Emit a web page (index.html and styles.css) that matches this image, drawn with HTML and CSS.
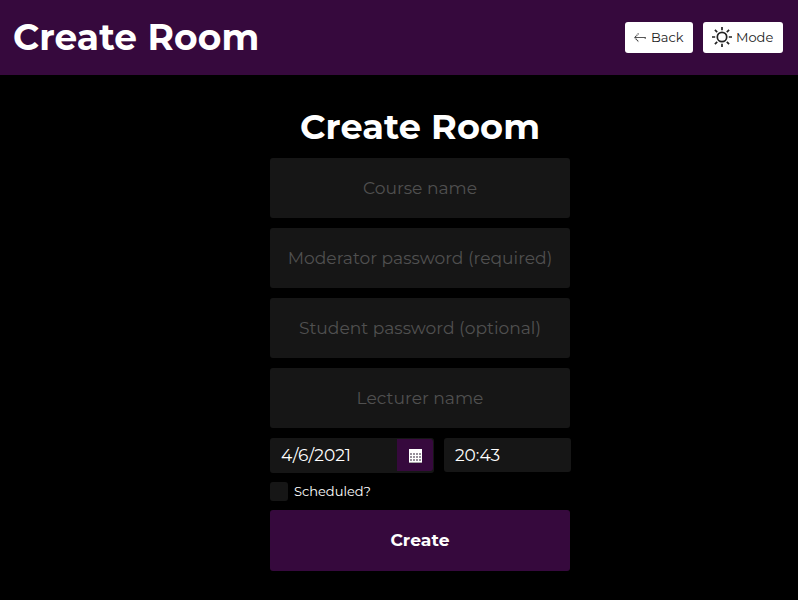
FILE: index.html
```html
<!DOCTYPE html>
<html lang="en">
<head>
<meta charset="utf-8">
<title>Create Room</title>
<link rel="stylesheet" href="styles.css">
</head>
<body>
<header class="topbar">
  <h1 class="title">Create Room</h1>
  <nav class="actions">
    <button class="action back" type="button">
      <svg class="arrow" width="12" height="12" viewBox="0 0 12 12"><path d="M4.5 1.5 .8 5.5 4.5 9.8" stroke-width="1.2" stroke-dasharray="1.2 .6"/><path d="M1 5.5H11.5M11.2 5v2"/></svg>
      <span class="label">Back</span>
    </button>
    <button class="action mode" type="button">
      <svg class="sun" width="20" height="20" viewBox="0 0 20 20"><circle cx="10" cy="10" r="4.7"/><path d="M10 0v3.2M10 16.8V20M0 10h3.2M16.8 10H20M2.9 2.9l2.3 2.3M14.8 14.8l2.3 2.3M17.1 2.9l-2.3 2.3M5.2 14.8l-2.3 2.3"/></svg>
      <span class="label">Mode</span>
    </button>
  </nav>
</header>
<main>
  <form class="form">
    <h2 class="title heading">Create Room</h2>
    <input class="field" type="text" placeholder="Course name">
    <input class="field" type="text" placeholder="Moderator password (required)">
    <input class="field" type="text" placeholder="Student password (optional)">
    <input class="field" type="text" placeholder="Lecturer name">
    <div class="when">
      <div class="date">
        <input class="date-value" type="text" value="4/6/2021">
        <button class="picker" type="button" aria-label="Calendar">
          <svg width="13" height="14" viewBox="0 0 13 14" shape-rendering="crispEdges"><path d="M0 0h13v14H0z" fill="#fff"/><path d="M1 5h11M1 8h11M1 11h11" stroke="#96909a" stroke-width="2" stroke-dasharray="2 1"/><path d="M0 13.5h13" stroke="#aaa"/></svg>
        </button>
      </div>
      <input class="time" type="text" value="20:43">
    </div>
    <label class="scheduled"><input class="check" type="checkbox"><span class="label">Scheduled?</span></label>
    <button class="create" type="button">Create</button>
  </form>
</main>
</body>
</html>
```
FILE: styles.css
```css
* { box-sizing: border-box; }
body { margin: 0; min-height: 600px; background: #000; color: #fff; font-family: Montserrat, Inter, sans-serif; }
button, input { font-family: inherit; margin: 0; border: 0; outline: 0; padding: 0; }
.topbar { height: 75px; background: #36093d; display: flex; justify-content: space-between; align-items: center; padding: 0 15px 0 13px; }
.title { margin: 0; padding-bottom: 1px; font-size: 36px; line-height: 44px; font-weight: 700; letter-spacing: .13px; white-space: nowrap; }
.actions { display: flex; gap: 10px; }
.action { height: 31px; border-radius: 3px; background: #fff; color: #222; font-size: 13px; display: flex; align-items: center; }
.back { width: 68px; padding-left: 9px; gap: 5px; }
.mode { width: 80px; padding-left: 9px; gap: 4px; }
.arrow { fill: none; stroke: #444; stroke-width: .9; }
.sun { fill: none; stroke: #222; stroke-width: 1.7; margin-bottom: 1px; }
.label { padding-bottom: 2px; }
.form { width: 300px; margin: 30px 0 0 270px; display: flex; flex-direction: column; gap: 10px; }
.heading { text-align: center; height: 43px; font-size: 35.1px; }
.field { height: 60px; padding-bottom: 2px; border-radius: 3px; background: #161616; color: #fff; font-size: 17.1px; text-align: center; }
.field::placeholder { color: #505050; opacity: 1; }
.when { display: flex; gap: 10px; width: 301px; height: 35px; align-items: flex-start; }
.date { width: 164px; height: 35px; display: flex; background: #161616; border-radius: 3px; padding: 1px 1px 2px 11px; }
.date-value { width: 116px; background: none; color: #fff; font-size: 17px; }
.picker { width: 36px; height: 32px; background: #36093d; border-radius: 0 3px 3px 0; display: flex; align-items: center; justify-content: center; }
.picker svg { margin-top: 2px; }
.time { width: 127px; height: 34px; padding-left: 11px; background: #161616; border-radius: 3px; color: #fff; font-size: 17px; }
.scheduled { height: 19px; margin-top: -1px; display: flex; align-items: center; gap: 6px; font-size: 13px; }
.check { appearance: none; width: 18px; height: 19px; background: #161616; border-radius: 3px; }
.create { height: 61px; margin-top: -1px; padding-bottom: 2px; background: #36093d; color: #fff; border-radius: 3px; font-size: 17.1px; font-weight: 700; letter-spacing: .1px; }
```
